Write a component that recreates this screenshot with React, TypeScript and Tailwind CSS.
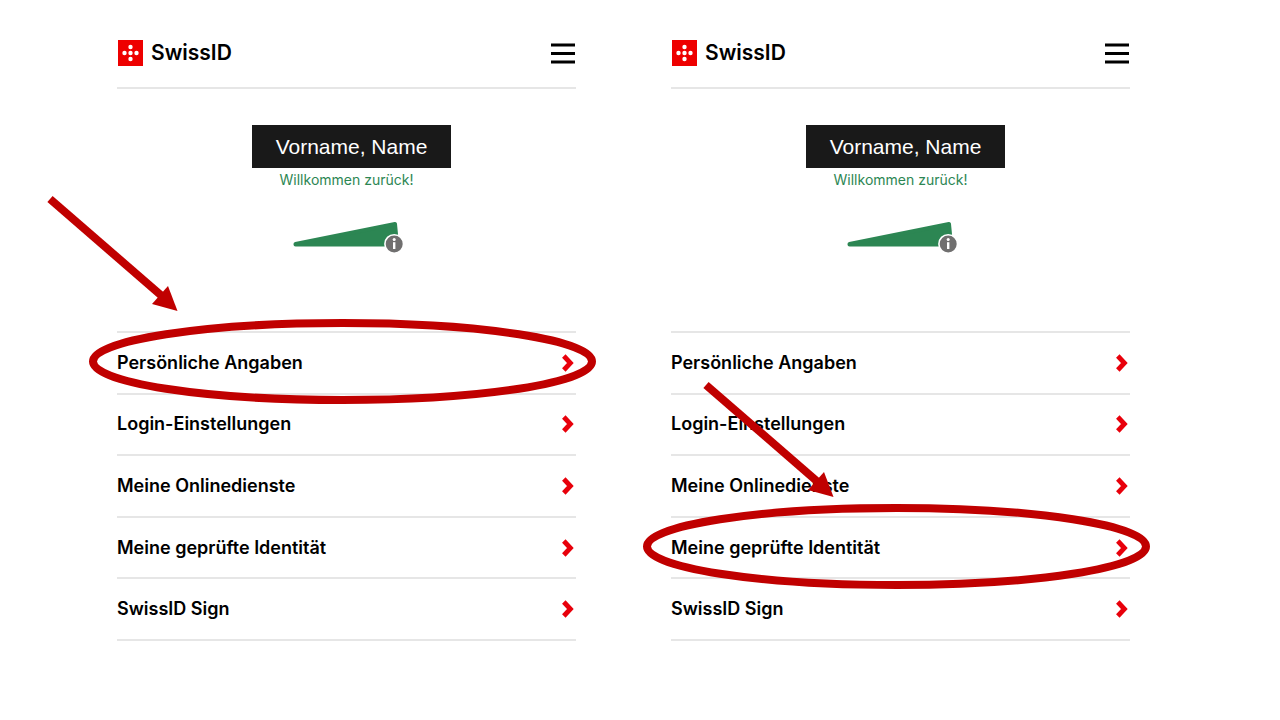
import React from "react";

const menuItems = [
  "Persönliche Angaben",
  "Login-Einstellungen",
  "Meine Onlinedienste",
  "Meine geprüfte Identität",
  "SwissID Sign",
];

function Logo() {
  return (
    <svg width="26" height="26" viewBox="0 0 26 26" aria-hidden="true">
      <rect x="1" width="25" height="26" fill="#ee0000" />
      <g fill="#fff">
        <circle cx="13.5" cy="7" r="2.2" />
        <circle cx="7.5" cy="13" r="2.2" />
        <circle cx="13.5" cy="13" r="2.2" />
        <circle cx="19.5" cy="13" r="2.2" />
        <circle cx="13.5" cy="19" r="2.2" />
      </g>
    </svg>
  );
}

function MenuIcon() {
  return (
    <svg width="25" height="22" viewBox="0 0 25 22" aria-hidden="true">
      <path d="M0 3h24M0 11.5h24M0 20h24" stroke="#000" strokeWidth="3.2" />
    </svg>
  );
}

function Chevron() {
  return (
    <svg width="14" height="18" viewBox="0 0 14 18" aria-hidden="true">
      <path
        d="M1.8 2L8.4 9l-6.6 7"
        fill="none"
        stroke="#e8000b"
        strokeWidth="4.8"
      />
    </svg>
  );
}

function TrustLevel() {
  return (
    <svg width="114" height="34" viewBox="0 0 114 34" role="img" aria-label="Info">
      <path
        d="M5.5 24L105 4L107 24.5H5.5Z"
        fill="#2c8653"
        stroke="#2c8653"
        strokeWidth="4"
        strokeLinejoin="round"
      />
      <circle cx="104.2" cy="24" r="9.3" fill="#706f6f" stroke="#fff" strokeWidth="1.6" />
      <circle cx="104.2" cy="19.6" r="1.5" fill="#fff" />
      <path d="M104.2 22.2v6.8" stroke="#fff" strokeWidth="2.4" />
    </svg>
  );
}

// thick arrow pointing down right
function Arrow({ className }: { className: string }) {
  return (
    <svg
      width="132"
      height="116"
      viewBox="0 0 132 116"
      className={className}
      aria-hidden="true"
    >
      <path d="M3 4L116 102" stroke="#c00000" strokeWidth="8" />
      <path d="M130.5 116L105 109L121 91Z" fill="#c00000" />
    </svg>
  );
}

// ring drawn over a menu row, stretches with it
function Ring() {
  return (
    <svg
      className="absolute -left-6 -top-[10px] w-[calc(100%+40px)] h-[77px] overflow-visible pointer-events-none z-10"
      aria-hidden="true"
    >
      <ellipse
        cx="50%"
        cy="50%"
        rx="50%"
        ry="50%"
        fill="none"
        stroke="#c00000"
        strokeWidth="8"
      />
    </svg>
  );
}

interface PanelProps {
  marked: string;
  arrowClass: string;
}

function Panel({ marked, arrowClass }: PanelProps) {
  return (
    <section className="relative">
      <header className="flex items-center justify-between h-[70px] border-b-2 border-[#e6e6e6]">
        <a href="#" className="flex items-center gap-2 text-[21px] font-semibold">
          <Logo />
          SwissID
        </a>
        <button type="button" aria-label="Menü">
          <MenuIcon />
        </button>
      </header>

      <div className="flex flex-col items-center pt-9">
        <h2 className="ml-[10px] px-6 h-[43px] leading-[43px] bg-[#191919] text-white text-[21px] font-['Liberation_Sans',sans-serif]">
          Vorname, Name
        </h2>
        <p className="text-sm leading-6 text-[#2c8653]">Willkommen zurück!</p>
        <div className="pt-7">
          <TrustLevel />
        </div>
      </div>

      <ul className="mt-[77px] grid grid-rows-5 min-h-[310px] border-t-2 border-[#e6e6e6]">
        {menuItems.map((item) => (
          <li key={item} className="relative border-b-2 border-[#e6e6e6]">
            <a
              href="#"
              className="flex h-full items-center justify-between text-lg font-semibold"
            >
              {item}
              <Chevron />
            </a>
            {item === marked && <Ring />}
          </li>
        ))}
      </ul>
      <Arrow className={arrowClass} />
    </section>
  );
}

export default function App() {
  return (
    <main className="grid grid-cols-2 gap-[95px] min-h-screen bg-white text-black pt-[19px] pb-20 pl-[117px] pr-[150px] font-[Inter,sans-serif]">
      <Panel
        marked="Persönliche Angaben"
        arrowClass="absolute -left-[70px] top-[176px] pointer-events-none"
      />
      <Panel
        marked="Meine geprüfte Identität"
        arrowClass="absolute left-8 top-[362px] pointer-events-none"
      />
    </main>
  );
}
